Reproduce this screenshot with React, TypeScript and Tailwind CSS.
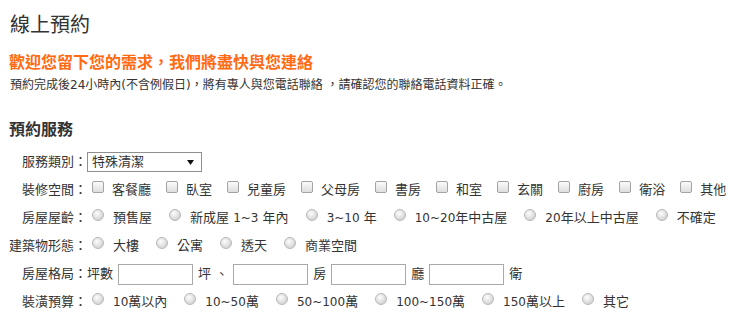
import type { ReactNode } from "react";

const SPACES = ["客餐廳", "臥室", "兒童房", "父母房", "書房", "和室", "玄關", "廚房", "衛浴", "其他"];
const AGES = ["預售屋", "新成屋 1~3 年內", "3~10 年", "10~20年中古屋", "20年以上中古屋", "不確定"];
const TYPES = ["大樓", "公寓", "透天", "商業空間"];
const BUDGETS = ["10萬以內", "10~50萬", "50~100萬", "100~150萬", "150萬以上", "其它"];

// digits render a touch smaller than the CJK text
function Txt({ s }: { s: string }) {
  const parts = s.split(/([0-9~]+)/);
  return (
    <span>
      {parts.map((p, i) =>
        /[0-9~]/.test(p) ? (
          <span key={i} className="text-[12px]">{p}</span>
        ) : (
          p
        )
      )}
    </span>
  );
}

function Check({ label }: { label: string }) {
  return (
    <label className="flex items-center mr-[15px] whitespace-nowrap">
      <span className="w-[12px] h-[12px] mb-[6px] mr-[8px] rounded-[2px] border border-[#a3a3a3] bg-[linear-gradient(#fbfbfb,#dedede)] shrink-0" />
      <Txt s={label} />
    </label>
  );
}

function Radio({ label }: { label: string }) {
  return (
    <label className="flex items-center mr-[17px] whitespace-nowrap">
      <span className="w-[12px] h-[12px] mb-[6px] mr-[9px] rounded-full border border-[#b8b8b8] bg-[radial-gradient(circle_at_40%_35%,#fdfdfd,#d3d3d3_75%)] shrink-0" />
      <Txt s={label} />
    </label>
  );
}

function Row({ label, children }: { label: string; children: ReactNode }) {
  return (
    <div className="flex h-[28px] items-center">
      <div className="w-[78px] shrink-0 text-right whitespace-nowrap">{label}</div>
      <div className="flex items-center">{children}</div>
    </div>
  );
}

function Box() {
  return <div className="w-[75px] h-[21px] border border-[#a9a9a9] bg-white shrink-0" />;
}

export default function App() {
  return (
    <div className="w-[737px] h-[332px] bg-white text-[#333] font-['DejaVu_Sans','Noto_Sans_CJK_TC',sans-serif] pl-[9px] pt-[10px] overflow-hidden">
      <h1 className="text-[20px] leading-[28px] font-normal pl-px font-['Noto_Sans_CJK_TC',serif]">線上預約</h1>

      <h2 className="mt-[14px] text-[16px] leading-[22px] font-bold text-[#ff6a13]">
        歡迎您留下您的需求，我們將盡快與您連絡
      </h2>
      <p className="mt-[2px] text-[12px] leading-[18px] pl-px">
        預約完成後24小時內(不含例假日)，將有專人與您電話聯絡 ，請確認您的聯絡電話資料正確。
      </p>

      <h3 className="mt-[25px] text-[16px] leading-[22px] font-bold">預約服務</h3>

      <div className="mt-[7px] text-[13px]">
        <Row label="服務類別：">
          <div className="flex items-center justify-between w-[115px] h-[20px] border border-[#8f8f8f] bg-white pl-[4px] pr-[7px]">
            <span>特殊清潔</span>
            <svg width="7" height="5" viewBox="0 0 7 5">
              <polygon points="0,0 7,0 3.5,5" fill="#111" />
            </svg>
          </div>
        </Row>

        <Row label="裝修空間：">
          <div className="flex items-center pl-[5px]">
            {SPACES.map(s => <Check key={s} label={s} />)}
          </div>
        </Row>

        <Row label="房屋屋齡：">
          <div className="flex items-center pl-[5px]">
            {AGES.map(s => <Radio key={s} label={s} />)}
          </div>
        </Row>

        <Row label="建築物形態：">
          <div className="flex items-center pl-[5px]">
            {TYPES.map(s => <Radio key={s} label={s} />)}
          </div>
        </Row>

        <Row label="房屋格局：">
          <div className="flex items-center gap-[5px]">
            <span>坪數</span>
            <Box />
            <span>坪 、</span>
            <Box />
            <span>房</span>
            <Box />
            <span>廳</span>
            <Box />
            <span>衛</span>
          </div>
        </Row>

        <Row label="裝潢預算：">
          <div className="flex items-center pl-[5px]">
            {BUDGETS.map(s => <Radio key={s} label={s} />)}
          </div>
        </Row>
      </div>
    </div>
  );
}
